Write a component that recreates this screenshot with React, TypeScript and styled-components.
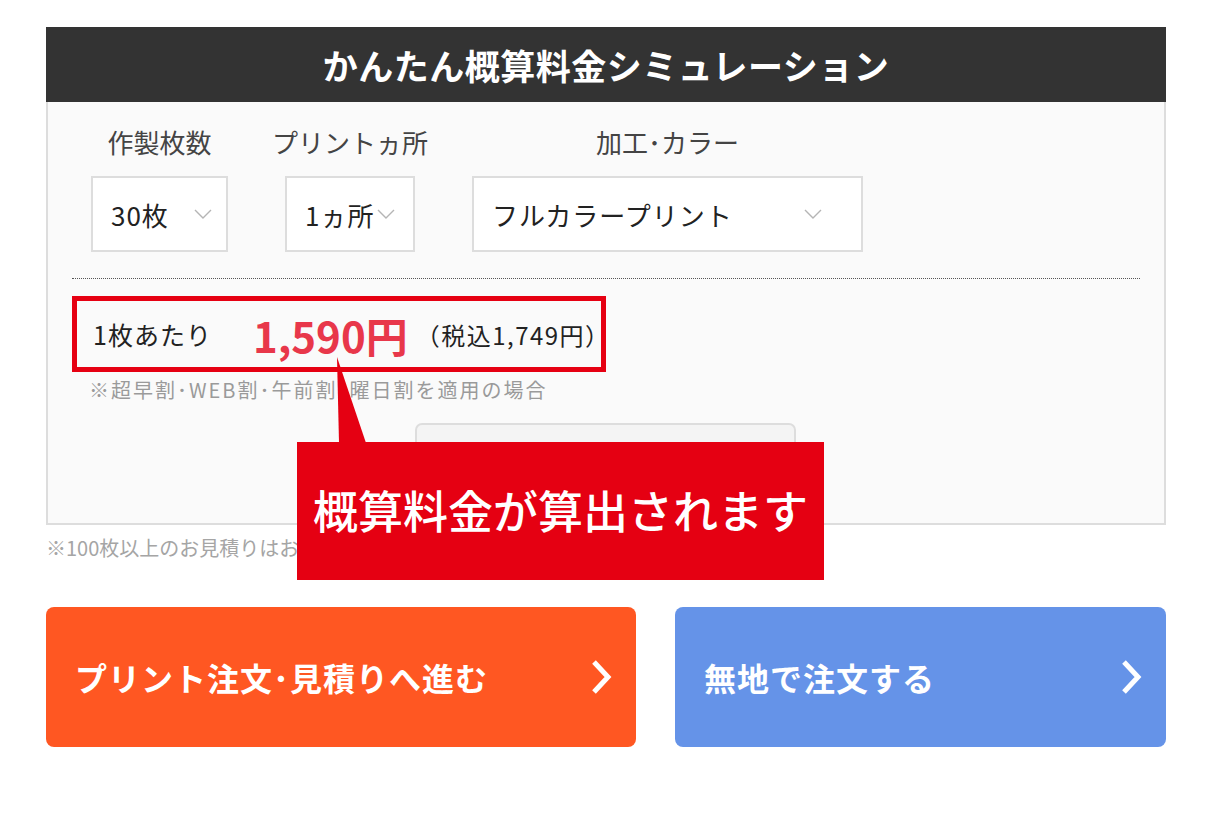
import React from "react";
import styled, { createGlobalStyle } from "styled-components";

const GlobalStyle = createGlobalStyle`
  body {
    margin: 0;
    background: #ffffff;
    font-family: "Noto Sans CJK JP", "Noto Sans", sans-serif;
  }
`;

type Option = { label: string; value: string; width: number; padRight: number; padLeft: number };

const options: Option[] = [
  { label: "作製枚数", value: "30枚", width: 137, padLeft: 18, padRight: 14 },
  { label: "プリントヵ所", value: "1ヵ所", width: 130, padLeft: 18, padRight: 18 },
  { label: "加工･カラー", value: "フルカラープリント", width: 391, padLeft: 18, padRight: 39 },
];

function Chevron() {
  return (
    <svg width="18" height="10" viewBox="0 0 18 10">
      <polyline points="1,1 9,9 17,1" fill="none" stroke="#b5b5b5" strokeWidth="1.4" />
    </svg>
  );
}

function ArrowRight() {
  return (
    <svg width="22" height="36" viewBox="0 0 22 36">
      <polyline points="4,3 18,18 4,33" fill="none" stroke="#ffffff" strokeWidth="5" strokeLinejoin="miter" />
    </svg>
  );
}

export default function App() {
  return (
    <>
      <GlobalStyle />
      <Page>
        <Panel>
          <Header>かんたん概算料金シミュレーション</Header>
          <Body>
            <SelectRow>
              {options.map((o) => (
                <Field key={o.label} $width={o.width}>
                  <FieldLabel>{o.label}</FieldLabel>
                  <Select $padLeft={o.padLeft} $padRight={o.padRight}>
                    <span>{o.value}</span>
                    <Chevron />
                  </Select>
                </Field>
              ))}
            </SelectRow>
            <Divider />
            <PriceBox>
              <PerUnit>1枚あたり</PerUnit>
              <Price>1,590円</Price>
              <TaxPrice>（税込1,749円）</TaxPrice>
            </PriceBox>
            <Note>※超早割･WEB割･午前割･曜日割を適用の場合</Note>
            <GhostButton />
          </Body>
        </Panel>
        <Footnote>※100枚以上のお見積りはお問い合わせください</Footnote>
        <Actions>
          <ActionButton $bg="#ff5722">
            プリント注文･見積りへ進む
            <ArrowRight />
          </ActionButton>
          <ActionButton $bg="#6593e8">
            無地で注文する
            <ArrowRight />
          </ActionButton>
        </Actions>

        <CalloutTail viewBox="0 0 32 86" width="32" height="86">
          <polygon points="2,0 31,86 4,86" fill="#e50012" />
        </CalloutTail>
        <Callout>概算料金が算出されます</Callout>
      </Page>
    </>
  );
}

const Page = styled.div`
  position: relative;
  width: 1120px;
  padding: 27px 0 0 46px;
`;

const Panel = styled.div`
  display: flex;
  flex-direction: column;
`;

const Header = styled.div`
  height: 75px;
  background: #333333;
  color: #ffffff;
  font-size: 35px;
  font-weight: 700;
  display: flex;
  align-items: center;
  justify-content: center;
  letter-spacing: 0.5px;
`;

const Body = styled.div`
  background: #fafafa;
  border: 2px solid #dddddd;
  border-top: none;
  padding: 25px 24px 30px 22px;
  display: flex;
  flex-direction: column;
  align-items: flex-start;
`;

const SelectRow = styled.div`
  display: flex;
  gap: 57px;
  padding-left: 21px;
`;

const Field = styled.div<{ $width: number }>`
  width: ${(p) => p.$width}px;
  display: flex;
  flex-direction: column;
  align-items: center;
`;

const FieldLabel = styled.div`
  font-size: 26px;
  line-height: 30px;
  color: #444444;
  margin-bottom: 19px;
  white-space: nowrap;
`;

const Select = styled.div<{ $padLeft: number; $padRight: number }>`
  box-sizing: border-box;
  width: 100%;
  height: 76px;
  background: #ffffff;
  border: 2px solid #dddddd;
  display: flex;
  align-items: center;
  justify-content: space-between;
  padding: 0 ${(p) => p.$padRight}px 0 ${(p) => p.$padLeft}px;
  font-size: 26px;
  letter-spacing: 1px;
  color: #222222;
  white-space: nowrap;

  svg {
    flex-shrink: 0;
  }
`;

const Divider = styled.div`
  align-self: stretch;
  margin: 26px 0 17px 2px;
  border-top: 1px dotted #555555;
`;

const PriceBox = styled.div`
  box-sizing: border-box;
  display: flex;
  align-items: center;
  height: 76px;
  width: 534px;
  margin-left: 2px;
  padding-left: 16px;
  border: 5px solid #e60012;
  white-space: nowrap;
`;

const PerUnit = styled.span`
  font-size: 25px;
  letter-spacing: 1px;
  color: #222222;
  margin-right: 41px;
`;

const Price = styled.span`
  font-size: 42px;
  font-weight: 700;
  color: #e8374a;
  margin-right: 8px;
`;

const TaxPrice = styled.span`
  font-size: 24px;
  color: #222222;
  letter-spacing: 1.5px;
`;

const Note = styled.div`
  margin: 5px 0 0 19px;
  font-size: 20px;
  line-height: 26px;
  letter-spacing: 2px;
  color: #9a9a9a;
  white-space: nowrap;
`;

const GhostButton = styled.div`
  align-self: center;
  margin-top: 20px;
  width: 381px;
  height: 70px;
  box-sizing: border-box;
  border: 2px solid #dddddd;
  border-radius: 7px;
  background: #f4f4f4;
`;

const Footnote = styled.div`
  margin-top: 9px;
  font-size: 20px;
  line-height: 28px;
  color: #a5a5a5;
  white-space: nowrap;
`;

const Actions = styled.div`
  display: grid;
  grid-template-columns: 590px 491px;
  gap: 39px;
  margin-top: 45px;
`;

const ActionButton = styled.div<{ $bg: string }>`
  height: 140px;
  border-radius: 8px;
  background: ${(p) => p.$bg};
  color: #ffffff;
  font-size: 32px;
  font-weight: 700;
  letter-spacing: 1px;
  display: flex;
  align-items: center;
  justify-content: space-between;
  padding: 0 24px 0 29px;
  white-space: nowrap;
`;

const CalloutTail = styled.svg`
  position: absolute;
  left: 335px;
  top: 357px;
`;

const Callout = styled.div`
  position: absolute;
  left: 297px;
  top: 442px;
  width: 527px;
  height: 138px;
  background: #e50012;
  color: #ffffff;
  font-size: 45px;
  font-weight: 500;
  display: flex;
  align-items: center;
  justify-content: center;
  padding-bottom: 4px;
  box-sizing: border-box;
`;
